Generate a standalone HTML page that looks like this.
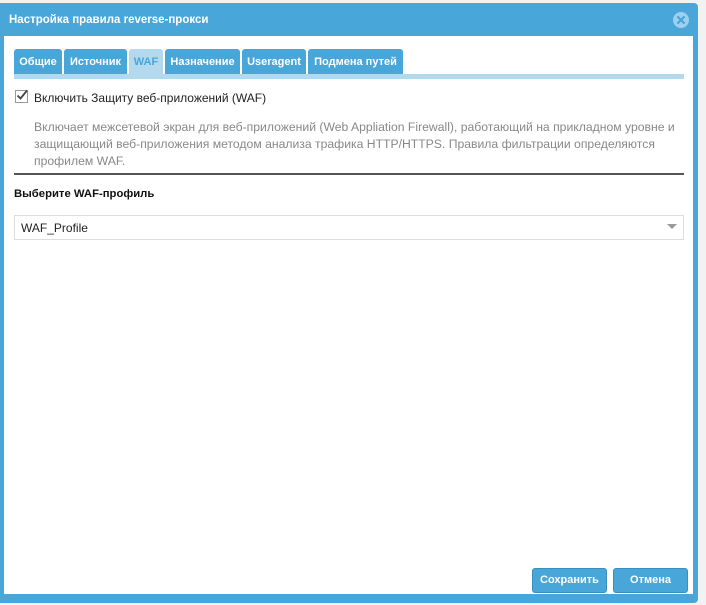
<!DOCTYPE html>
<html><head><meta charset="utf-8"><style>
body{margin:0;width:706px;height:605px;background:#f2f2f2;font-family:"Liberation Sans",sans-serif;position:relative;overflow:hidden}
.dlg{position:absolute;left:0;top:3px;width:698px;height:600px;background:#48a6d8;border-radius:0 4px 4px 0}
.title{position:absolute;left:9px;top:14px;color:#fff;font-weight:bold;font-size:11.5px;white-space:nowrap}
.body{position:absolute;left:4px;top:36px;width:689px;height:558px;background:#fff}
.tab{position:absolute;top:49px;height:25px;background:#48a6d8;color:#fff;font-weight:bold;font-size:11px;line-height:26px;text-align:center;border-radius:3px 3px 0 0;white-space:nowrap}
.tab.a{background:#b3d9ef;color:#48a6d8}
.strip{position:absolute;left:14px;top:74px;width:670px;height:5px;background:#b3d9ef}
.t{position:absolute;font-size:12px;white-space:nowrap}
.btn{position:absolute;top:568px;height:23px;background:#48a6d8;border:1px solid #3a8fc0;border-radius:3px;color:#fff;font-weight:bold;font-size:11px;line-height:23px;text-align:center}
</style></head><body>
<div class="dlg"></div>
<div class="title">Настройка правила reverse-прокси</div>
<svg style="position:absolute;left:673px;top:12px" width="16" height="16" viewBox="0 0 16 16"><circle cx="8" cy="8" r="8" fill="#9dd0ef"/><path d="M5 5L11 11M11 5L5 11" stroke="#48a6d8" stroke-width="2.2" stroke-linecap="round"/></svg>
<div class="body"></div>
<div class="tab" style="left:14px;width:48px">Общие</div>
<div class="tab" style="left:64px;width:63px">Источник</div>
<div class="tab a" style="left:129px;width:34px">WAF</div>
<div class="tab" style="left:165px;width:75px">Назначение</div>
<div class="tab" style="left:242px;width:64px">Useragent</div>
<div class="tab" style="left:308px;width:95px">Подмена путей</div>
<div class="strip"></div>
<div style="position:absolute;left:15px;top:90px;width:11px;height:11px;border:1px solid #999;background:#fff"></div>
<svg style="position:absolute;left:15px;top:88px" width="14" height="14" viewBox="0 0 14 14"><path d="M2.5 7.5L5.5 10.5L12 2.5" stroke="#444" stroke-width="1.8" fill="none"/></svg>
<div class="t" style="left:34px;top:91px;color:#222">Включить Защиту веб-приложений (WAF)</div>
<div class="t" style="left:34px;top:119px;color:#888;line-height:17px;font-size:12.2px">Включает межсетевой экран для веб-приложений (Web Appliation Firewall), работающий на прикладном уровне и<br>защищающий веб-приложения методом анализа трафика HTTP/HTTPS. Правила фильтрации определяются<br>профилем WAF.</div>
<div style="position:absolute;left:14px;top:173px;width:670px;height:2px;background:#555"></div>
<div class="t" style="left:14px;top:188px;font-weight:bold;color:#111;font-size:11.3px">Выберите WAF-профиль</div>
<div style="position:absolute;left:14px;top:215px;width:668px;height:23px;border:1px solid #ddd"></div>
<div class="t" style="left:21px;top:221px;color:#222">WAF_Profile</div>
<svg style="position:absolute;left:667px;top:224px" width="10" height="6"><path d="M0 0H10L5 5Z" fill="#999"/></svg>
<div class="btn" style="left:532px;width:73px">Сохранить</div>
<div class="btn" style="left:613px;width:73px">Отмена</div>
</body></html>
